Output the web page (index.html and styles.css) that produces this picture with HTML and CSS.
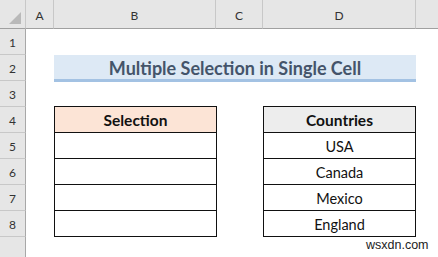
FILE: index.html
```html
<!DOCTYPE html>
<html>
<head>
<meta charset="utf-8">
<link rel="stylesheet" href="styles.css">
</head>
<body>
<div class="sheet">
  <div class="corner"><span class="tri"></span></div>
  <div class="colhead">A</div>
  <div class="colhead">B</div>
  <div class="colhead">C</div>
  <div class="colhead">D</div>
  <div class="colhead last"></div>

  <div class="rowhead r1">1</div>
  <div class="rowhead r2">2</div>
  <div class="rowhead r3">3</div>
  <div class="rowhead r4">4</div>
  <div class="rowhead r5">5</div>
  <div class="rowhead r6">6</div>
  <div class="rowhead r7">7</div>
  <div class="rowhead r8">8</div>
  <div class="rowhead r9"></div>

  <div class="title">Multiple Selection in Single Cell</div>

  <div class="table tb">
    <div class="cell head sel">Selection</div>
    <div class="cell"></div>
    <div class="cell"></div>
    <div class="cell"></div>
    <div class="cell"></div>
  </div>

  <div class="table td">
    <div class="cell head cty">Countries</div>
    <div class="cell">USA</div>
    <div class="cell">Canada</div>
    <div class="cell">Mexico</div>
    <div class="cell">England</div>
  </div>
</div>
<div class="watermark">wsxdn.com</div>
</body>
</html>
```
FILE: styles.css
```css
html, body {
  margin: 0;
  padding: 0;
  background: #fff;
  width: 438px;
  height: 257px;
  overflow: hidden;
}
body {
  position: relative;
  font-family: Lato, "Open Sans", "Liberation Sans", sans-serif;
}
.sheet {
  display: grid;
  grid-template-columns: 26px 28px 162px 47px 153px 22px;
  grid-template-rows: 29px repeat(8, 26px) 20px;
}
.corner {
  grid-column: 1;
  grid-row: 1;
  background: #e6e6e6;
  border-right: 1px solid #c8c8c8;
  border-bottom: 1px solid #a0a0a0;
  position: relative;
}
.tri {
  position: absolute;
  right: 4px;
  bottom: 4px;
  width: 0;
  height: 0;
  border-left: 12px solid transparent;
  border-bottom: 12px solid #b9b9b9;
}
.colhead {
  grid-row: 1;
  background: #e6e6e6;
  border-right: 1px solid #c8c8c8;
  border-bottom: 1px solid #a0a0a0;
  display: flex;
  align-items: center;
  justify-content: center;
  font-size: 12px;
  color: #333;
  padding-top: 2px;
  box-sizing: border-box;
}
.colhead.last { border-right: none; }
.rowhead {
  grid-column: 1;
  background: #e6e6e6;
  border-right: 1px solid #a8a8a8;
  border-bottom: 1px solid #c8c8c8;
  display: flex;
  align-items: center;
  justify-content: center;
  font-size: 12px;
  color: #333;
  box-sizing: border-box;
  padding-top: 2px;
}
.r1 { grid-row: 2; }
.r2 { grid-row: 3; }
.r3 { grid-row: 4; }
.r4 { grid-row: 5; }
.r5 { grid-row: 6; }
.r6 { grid-row: 7; }
.r7 { grid-row: 8; }
.r8 { grid-row: 9; }
.r9 { grid-row: 10; border-bottom: none; }

.title {
  grid-column: 3 / 6;
  grid-row: 3;
  background: #dde9f5;
  border-bottom: 3px solid #a3c2e3;
  height: 27px;
  box-sizing: border-box;
  display: flex;
  align-items: center;
  justify-content: center;
  font-weight: 700;
  font-size: 18px;
  color: #44546a;
  padding-top: 1px;
}

.table {
  grid-row: 5 / 10;
  display: grid;
  grid-template-rows: repeat(5, 26px);
  border-left: 1px solid #111;
  border-top: 1px solid #111;
  box-sizing: border-box;
  margin-top: -1px;
  height: 131px;
}
.tb { grid-column: 3; margin-right: -1px; }
.td { grid-column: 5; margin-right: 0; }
.cell {
  border-right: 1px solid #111;
  border-bottom: 1px solid #111;
  display: flex;
  align-items: center;
  justify-content: center;
  font-size: 14.5px;
  color: #111;
  padding-top: 1px;
  box-sizing: border-box;
}
.head { font-weight: 700; font-size: 15.5px; }
.sel { background: #fce4d6; }
.cty { background: #ededed; }

.watermark {
  position: absolute;
  left: 366px;
  top: 238px;
  font-family: "Liberation Sans", Arial, sans-serif;
  font-size: 12.5px;
  color: #222;
}
```
